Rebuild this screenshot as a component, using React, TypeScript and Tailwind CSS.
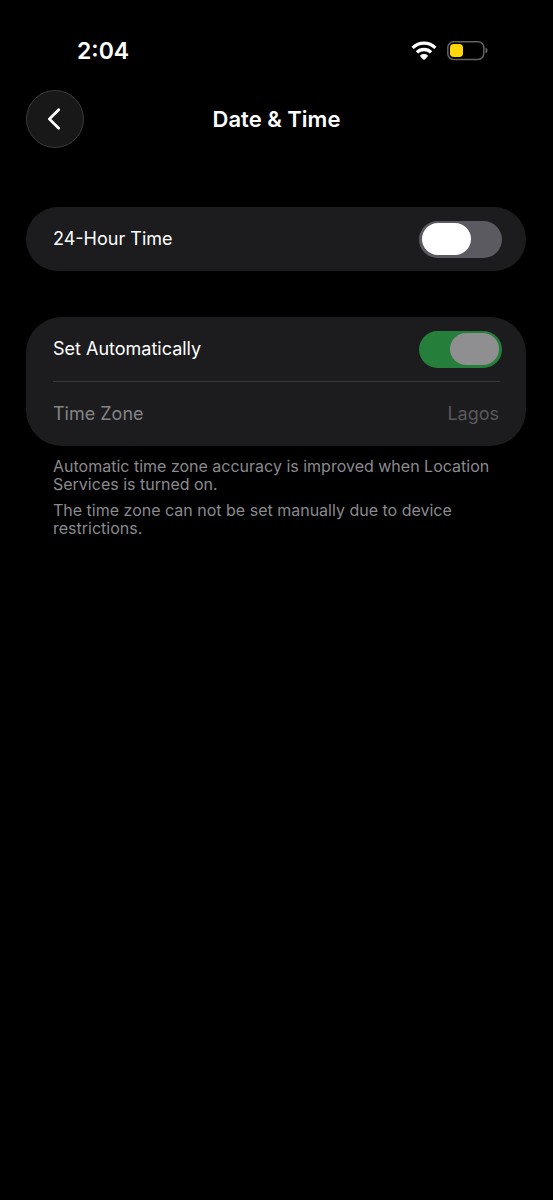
import { useState } from "react";

type SwitchProps = {
  id: string;
  checked: boolean;
  disabled?: boolean;
  onChange?: (checked: boolean) => void;
};

function Switch({ id, checked, disabled, onChange }: SwitchProps) {
  return (
    <input
      id={id}
      type="checkbox"
      role="switch"
      checked={checked}
      disabled={disabled}
      onChange={(event) => onChange?.(event.target.checked)}
      className="flex h-[37px] w-[83px] shrink-0 appearance-none items-center rounded-full bg-[#5b5a60] px-[3px] before:h-8 before:w-[49px] before:rounded-full before:bg-white before:content-[''] checked:justify-end checked:bg-[#30d158] disabled:checked:bg-[#257f3b] disabled:before:bg-[#8f8e90]"
    />
  );
}

function WifiIcon() {
  return (
    <svg width="26" height="20" viewBox="0 0 26 20" fill="none" aria-hidden="true">
      <path d="M1.6 6.9C8 .5 18 .5 24.4 6.9" stroke="white" strokeWidth="3.4" />
      <path d="M5.9 11.4C9.9 7.5 16.1 7.5 20.1 11.4" stroke="white" strokeWidth="3.4" />
      <path
        d="M12.3 18.4L9.4 15.5C9 15.1 9 14.6 9.4 14.3C11.5 12.5 14.5 12.5 16.6 14.3C17 14.6 17 15.1 16.6 15.5L13.7 18.4Q13 19 12.3 18.4Z"
        fill="white"
      />
    </svg>
  );
}

function BatteryIcon() {
  return (
    <svg width="42" height="20" viewBox="0 0 42 20" fill="none" aria-hidden="true">
      <rect x="0.8" y="0.8" width="36" height="17.6" rx="5.6" stroke="#626262" strokeWidth="1.5" />
      <rect x="3" y="3.1" width="13" height="13" rx="3.8" fill="#ffd60a" />
      <path d="M38.5 6.6C41.3 7.4 41.3 11.6 38.5 12.4Z" fill="#626262" />
    </svg>
  );
}

export default function App() {
  const [use24Hour, setUse24Hour] = useState(false);

  return (
    <div className="min-h-screen bg-black font-['Inter',sans-serif] text-white">
      <div className="flex h-[90px] items-center justify-between pt-3 pr-16 pl-[77px]">
        <time className="text-[23px] leading-7 font-semibold">2:04</time>
        <div className="flex items-center gap-[10px]">
          <WifiIcon />
          <BatteryIcon />
        </div>
      </div>

      <header className="grid grid-cols-[58px_1fr_58px] items-center px-[26px]">
        <button
          type="button"
          aria-label="Back"
          className="flex size-[58px] items-center justify-center rounded-full border border-[#3a3a3a] bg-[#181818]"
        >
          <svg width="16" height="22" viewBox="0 0 16 22" fill="none" aria-hidden="true">
            <path
              d="M11.7 1.8L2.4 11L11.7 20.2"
              stroke="white"
              strokeWidth="2.7"
              strokeLinecap="round"
              strokeLinejoin="round"
            />
          </svg>
        </button>
        <h1 className="text-center text-[22px] leading-7 font-semibold">Date &amp; Time</h1>
      </header>

      <main className="pt-[59px] pr-[27px] pl-[26px] text-[18px] leading-6">
        <section className="flex h-16 items-center justify-between rounded-[32px] bg-[#1c1c1e] pr-6 pl-[27px]">
          <label htmlFor="hour-format">24-Hour Time</label>
          <Switch id="hour-format" checked={use24Hour} onChange={setUse24Hour} />
        </section>

        <section className="mt-[46px] rounded-[36px] bg-[#1c1c1e]">
          <div className="flex h-16 items-center justify-between pr-6 pl-[27px]">
            <label htmlFor="set-automatically">Set Automatically</label>
            <Switch id="set-automatically" checked disabled />
          </div>
          <hr className="mr-[26px] ml-[27px] border-[#39393b]" />
          <div className="flex h-16 items-center justify-between px-[27px]">
            <span className="text-[#848486]">Time Zone</span>
            <span className="text-[#59595d]">Lagos</span>
          </div>
        </section>

        <footer className="space-y-2 px-[27px] pt-[11px] text-[16px] leading-[18px] text-[#8a8a8f]">
          <p>Automatic time zone accuracy is improved when Location Services is turned on.</p>
          <p>The time zone can not be set manually due to device restrictions.</p>
        </footer>
      </main>
    </div>
  );
}
